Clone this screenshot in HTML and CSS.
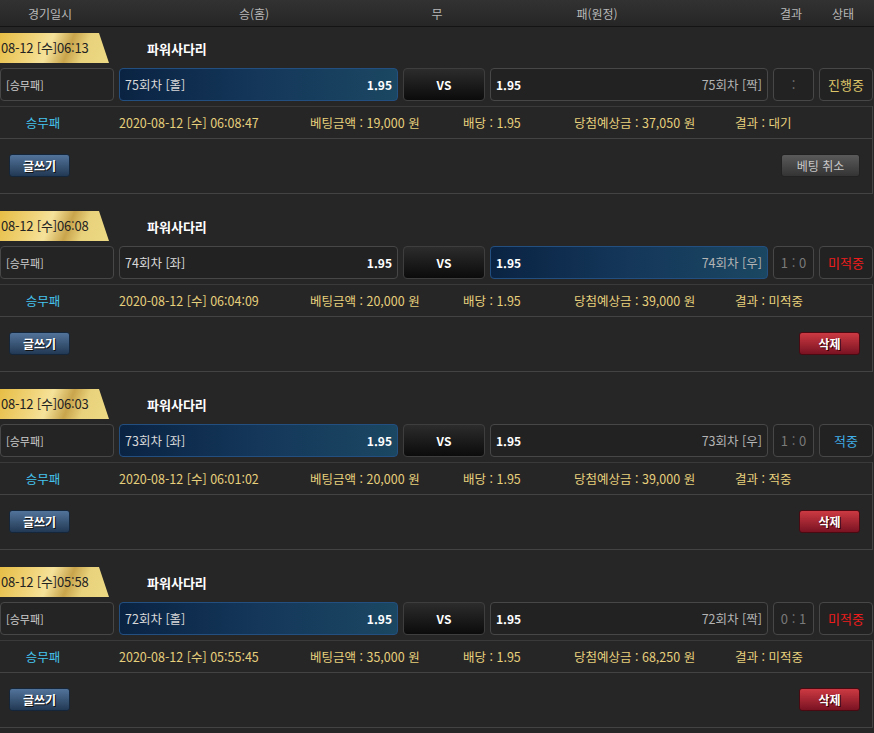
FILE: index.html
```html
<!DOCTYPE html>
<html lang="ko">
<head>
<meta charset="utf-8">
<title>베팅내역</title>
<link rel="stylesheet" href="styles.css">
</head>
<body>
<div class="head">
  <span>경기일시</span><span>승(홈)</span><span>무</span><span>패(원정)</span><span></span><span>결과</span><span>상태</span>
</div>

<div class="block">
  <div class="title-row"><div class="badge">08-12 [수]06:13</div><div class="game">파워사다리</div></div>
  <div class="bet-row">
    <div class="cell type">[승무패]</div>
    <div class="cell pick sel"><span>75회차 [홀]</span><b>1.95</b></div>
    <div class="cell vs">VS</div>
    <div class="cell pick"><b>1.95</b><span class="dim">75회차 [짝]</span></div>
    <div class="cell res">:</div>
    <div class="cell st ing">진행중</div>
  </div>
  <div class="lower">
    <div class="info">
      <span class="kind">승무패</span><span>2020-08-12 [수] 06:08:47</span><span>베팅금액 : 19,000 원</span><span>배당 : 1.95</span><span>당첨예상금 : 37,050 원</span><span>결과 : 대기</span>
    </div>
    <div class="actions"><button class="btn write">글쓰기</button><button class="btn cancel">베팅 취소</button></div>
  </div>
</div>

<div class="block">
  <div class="title-row"><div class="badge">08-12 [수]06:08</div><div class="game">파워사다리</div></div>
  <div class="bet-row">
    <div class="cell type">[승무패]</div>
    <div class="cell pick"><span>74회차 [좌]</span><b>1.95</b></div>
    <div class="cell vs">VS</div>
    <div class="cell pick sel"><b>1.95</b><span class="dim">74회차 [우]</span></div>
    <div class="cell res">1 : 0</div>
    <div class="cell st lose">미적중</div>
  </div>
  <div class="lower">
    <div class="info">
      <span class="kind">승무패</span><span>2020-08-12 [수] 06:04:09</span><span>베팅금액 : 20,000 원</span><span>배당 : 1.95</span><span>당첨예상금 : 39,000 원</span><span>결과 : 미적중</span>
    </div>
    <div class="actions"><button class="btn write">글쓰기</button><button class="btn del">삭제</button></div>
  </div>
</div>

<div class="block">
  <div class="title-row"><div class="badge">08-12 [수]06:03</div><div class="game">파워사다리</div></div>
  <div class="bet-row">
    <div class="cell type">[승무패]</div>
    <div class="cell pick sel"><span>73회차 [좌]</span><b>1.95</b></div>
    <div class="cell vs">VS</div>
    <div class="cell pick"><b>1.95</b><span class="dim">73회차 [우]</span></div>
    <div class="cell res">1 : 0</div>
    <div class="cell st win">적중</div>
  </div>
  <div class="lower">
    <div class="info">
      <span class="kind">승무패</span><span>2020-08-12 [수] 06:01:02</span><span>베팅금액 : 20,000 원</span><span>배당 : 1.95</span><span>당첨예상금 : 39,000 원</span><span>결과 : 적중</span>
    </div>
    <div class="actions"><button class="btn write">글쓰기</button><button class="btn del">삭제</button></div>
  </div>
</div>

<div class="block">
  <div class="title-row"><div class="badge">08-12 [수]05:58</div><div class="game">파워사다리</div></div>
  <div class="bet-row">
    <div class="cell type">[승무패]</div>
    <div class="cell pick sel"><span>72회차 [홀]</span><b>1.95</b></div>
    <div class="cell vs">VS</div>
    <div class="cell pick"><b>1.95</b><span class="dim">72회차 [짝]</span></div>
    <div class="cell res">0 : 1</div>
    <div class="cell st lose">미적중</div>
  </div>
  <div class="lower">
    <div class="info">
      <span class="kind">승무패</span><span>2020-08-12 [수] 05:55:45</span><span>베팅금액 : 35,000 원</span><span>배당 : 1.95</span><span>당첨예상금 : 68,250 원</span><span>결과 : 미적중</span>
    </div>
    <div class="actions"><button class="btn write">글쓰기</button><button class="btn del">삭제</button></div>
  </div>
</div>
</body>
</html>
```

FILE: styles.css
```css
* { box-sizing: border-box; }
html, body { margin: 0; padding: 0; }
body {
  background: #262626;
  font-family: "Noto Sans CJK KR", "Noto Sans", sans-serif;
  font-size: 12px;
  color: #ddd;
  width: 874px;
  overflow: hidden;
}
.head {
  display: grid;
  grid-template-columns: 100px 308px 58px 262px 38px 50px 54px;
  height: 27px;
  align-items: center;
  background: linear-gradient(#323232, #262626);
  border-bottom: 1px solid #141414;
  color: #b8b8b8;
  font-size: 12px;
}
.head span { text-align: center; }

.block { margin-top: 17px; }
.head + .block { margin-top: 6px; }

.title-row { display: flex; align-items: center; height: 30px; }
.badge {
  width: 109px;
  height: 30px;
  line-height: 30px;
  padding-left: 1px;
  color: #222;
  font-size: 13px;
  background: linear-gradient(112deg, #e6bd45 0%, #f1d57c 30%, #f5e29a 45%, #c9a54c 62%, #e9d27c 76%, #ecd984 100%);
  clip-path: polygon(0 0, 99px 0, 109px 100%, 0 100%);
  letter-spacing: -0.2px;
}
.game { margin-left: 38px; color: #fff; font-weight: bold; font-size: 13px; }

.bet-row {
  display: grid;
  grid-template-columns: 114px 279px 82px 278px 41px 54px;
  column-gap: 5px;
  margin-top: 5px;
  height: 33px;
  width: 873px;
}
.cell {
  border: 1px solid #474747;
  border-radius: 4px;
  background: #222;
  display: flex;
  align-items: center;
  padding: 0 5px;
}
.type { color: #ccc; font-size: 11px; background: #242424; }
.pick { justify-content: space-between; color: #d8d8d8; font-size: 12.5px; }
.pick b { color: #fff; font-weight: bold; font-size: 12px; }
.pick .dim { color: #b4b4b4; }
.sel {
  background: linear-gradient(90deg, #0a2343 0%, #14375a 50%, #1b4762 100%);
  border-color: #234f80;
}
.vs {
  justify-content: center;
  font-weight: bold;
  color: #fff;
  background: linear-gradient(#2c2c2c, #0b0b0b);
  border-color: #3e3e3e;
}
.res { justify-content: center; color: #7a7a7a; font-size: 13px; }
.st { justify-content: center; padding: 0; font-size: 13px; }
.ing { color: #dcc468; }
.lose { color: #ef1c1c; }
.win { color: #40aee8; }

.lower {
  margin-top: 5px;
  width: 873px;
  border-right: 1px solid #434343;
  border-bottom: 1px solid #434343;
}
.info {
  display: grid;
  grid-template-columns: 119px 191px 153px 111px 161px 1fr;
  height: 33px;
  align-items: center;
  border-top: 1px solid #3a3a3a;
  border-bottom: 1px solid #434343;
  color: #e6d07c;
  font-size: 12.5px;
}
.info .kind { color: #45c3ec; text-align: center; padding-right: 33px; }

.actions {
  display: flex;
  justify-content: space-between;
  align-items: center;
  padding: 15px 12px 16px 9px;
}
.btn {
  height: 23px;
  border-radius: 3px;
  font-family: "Noto Sans CJK KR", "Noto Sans", sans-serif;
  font-size: 12px;
  padding: 0;
  cursor: pointer;
}
.write {
  width: 61px;
  color: #fff;
  font-weight: bold;
  background: linear-gradient(#52739a, #223954);
  border: 1px solid #16263a;
  text-shadow: 1px 1px 0 #111;
}
.cancel {
  width: 79px;
  color: #c8c8c8;
  background: linear-gradient(#5a5a5a, #343434);
  border: 1px solid #222;
}
.del {
  width: 61px;
  color: #fff;
  font-weight: bold;
  background: linear-gradient(#cc3a42, #7a1222);
  border: 1px solid #4a0a12;
  text-shadow: 1px 1px 0 #300;
}
```
